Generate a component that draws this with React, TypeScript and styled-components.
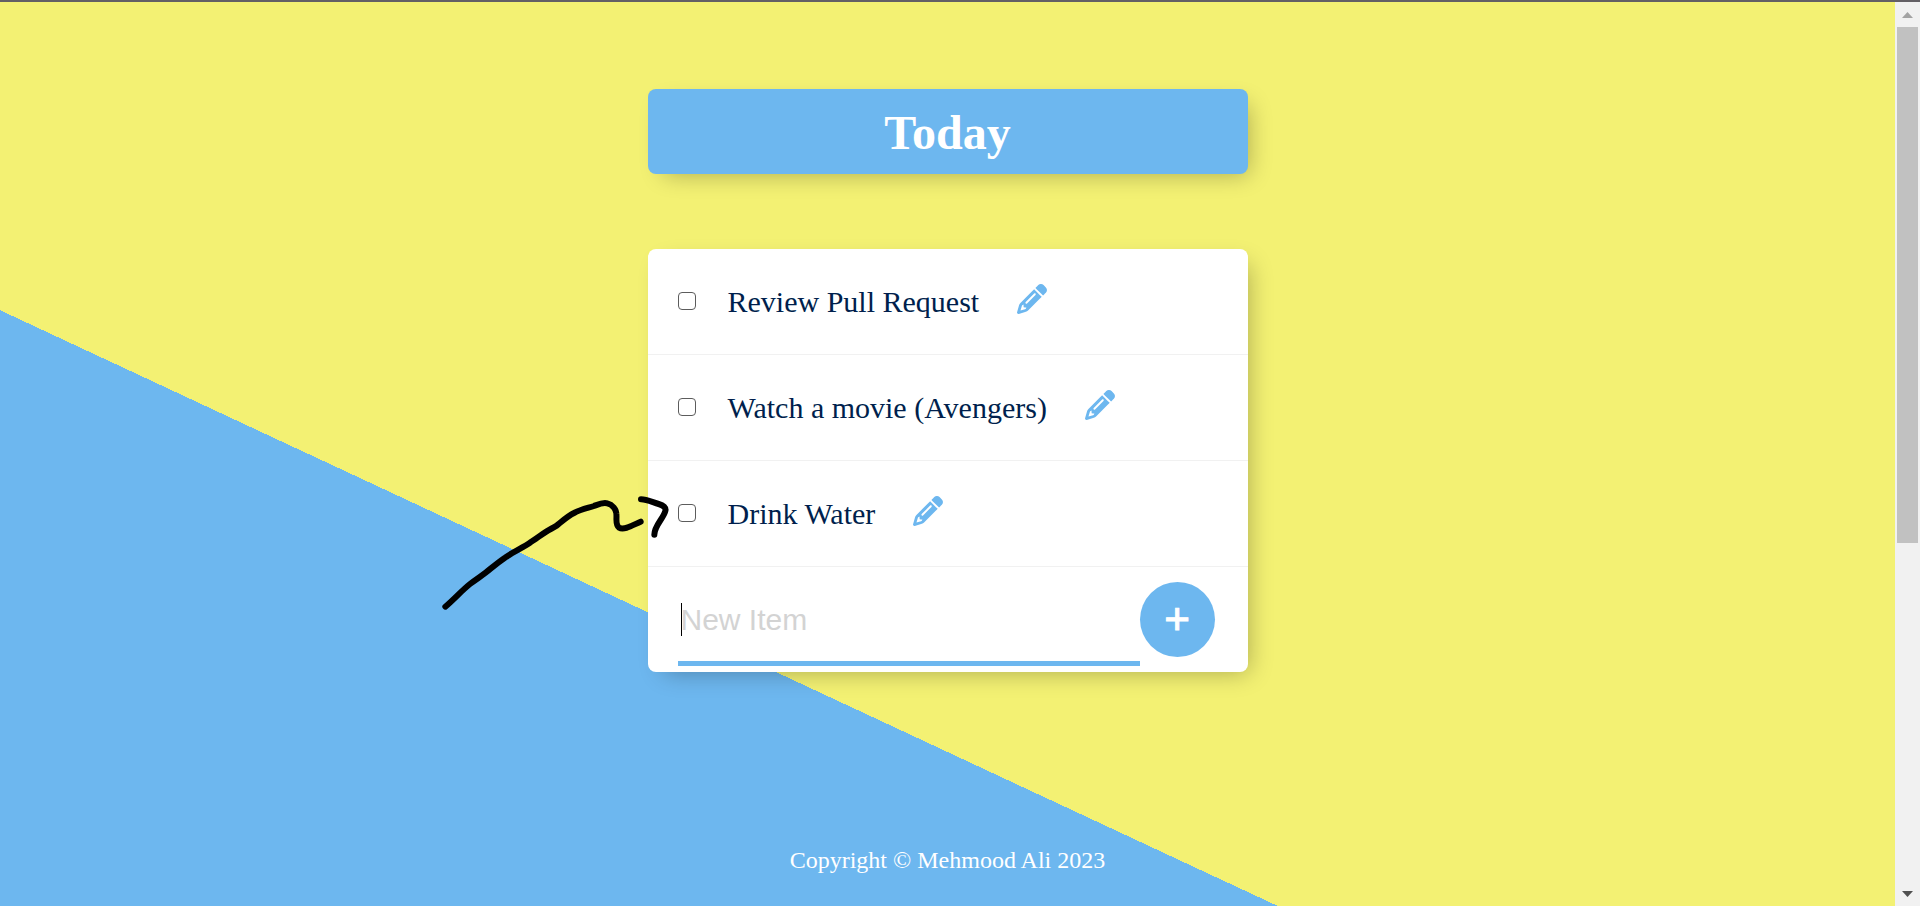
import React, { useState } from "react";
import styled, { createGlobalStyle } from "styled-components";
import { FaPencil } from "react-icons/fa6";

const blue = "#6db7ef";
const yellow = "#f3f173";

const GlobalStyle = createGlobalStyle`
  * { box-sizing: border-box; }
  body { margin: 0; }
`;

const Window = styled.div`
  display: flex;
  height: 100vh;
  border-top: 2px solid #636065;
  overflow: hidden;
`;

const Page = styled.main`
  flex: 1;
  min-width: 0;
  overflow: hidden;
  padding-top: 87px;
  background: ${yellow} linear-gradient(25deg, ${blue} 50%, ${yellow} 50%) no-repeat;
  background-size: 100% 1500px;
  font-family: "Liberation Serif", "Times New Roman", serif;
`;

const Box = styled.section<{ $tinted?: boolean }>`
  position: relative;
  max-width: 600px;
  margin: 0 auto 75px;
  border-radius: 8px;
  box-shadow: 8px 8px 23px -8px rgba(0, 0, 0, 0.3);
  background: ${(p) => (p.$tinted ? blue : "#fff")};
`;

const Title = styled.h1`
  margin: 0;
  padding: 16px 15px 14px;
  font-size: 48px;
  line-height: 55px;
  text-align: center;
  color: #fff;
`;

const Item = styled.div`
  display: flex;
  align-items: center;
  height: 106px;
  padding: 0 30px;
  border-bottom: 1px solid #f1f1f1;
`;

const Check = styled.input`
  appearance: none;
  width: 18px;
  height: 18px;
  margin: 0 32px 2px 0;
  border: 1px solid #5c5c5c;
  border-radius: 4px;
  background: #fff;
  &:checked { background: ${blue}; }
`;

const Label = styled.label`
  font-size: 30px;
  line-height: 36px;
  color: #001f4d;
`;

const EditButton = styled.button`
  display: flex;
  margin-left: 38px;
  padding: 0 0 6px;
  border: 0;
  background: none;
  color: ${blue};
  font-size: 30px;
`;

const NewItem = styled.form`
  display: flex;
  align-items: center;
  height: 105px;
  padding: 0 33px 0 30px;
`;

const Field = styled.div`
  position: relative;
  flex: 1;
  align-self: flex-end;
  margin-bottom: 6px;
`;

const TextInput = styled.input`
  display: block;
  width: 100%;
  height: 90px;
  padding: 2px 3px 0;
  border: 0;
  border-bottom: 5px solid ${blue};
  border-radius: 0;
  outline: 0;
  background: transparent;
  font: 30px "Liberation Sans", Arial, sans-serif;
  caret-color: transparent;
  &::placeholder { color: #d3d3d3; opacity: 1; }
`;

const Caret = styled.span`
  position: absolute;
  left: 3px;
  top: 27px;
  width: 1px;
  height: 33px;
  background: #000;
`;

const AddButton = styled.button`
  display: flex;
  align-items: center;
  justify-content: center;
  width: 75px;
  height: 75px;
  padding: 0 0 1px;
  border: 0;
  border-radius: 50%;
  background: ${blue};
  color: #fff;
  font: 44px "Liberation Sans", Arial, sans-serif;
  -webkit-text-stroke: 1px #fff;
`;

const Arrow = styled.svg`
  position: absolute;
  left: -218px;
  top: 231px;
  width: 260px;
  height: 140px;
  pointer-events: none;
`;

const Footer = styled.footer`
  padding-top: 99px;
  font-size: 24px;
  line-height: 28px;
  text-align: center;
  color: #fff;
`;

const Scrollbar = styled.div`
  display: flex;
  flex-direction: column;
  width: 25px;
  padding: 0 2px;
  background: #f1f1f1;
`;

const ScrollEnd = styled.svg`
  display: block;
  width: 21px;
  height: 25px;
`;

const Track = styled.div`
  flex: 1;
`;

const Thumb = styled.div`
  height: 60.4%;
  background: #c1c1c1;
`;

const items = ["Review Pull Request", "Watch a movie (Avengers)", "Drink Water"];

export default function App() {
  const [text, setText] = useState("");
  return (
    <Window>
      <GlobalStyle />
      <Page>
        <Box $tinted>
          <Title>Today</Title>
        </Box>
        <Box>
          {items.map((item, i) => (
            <Item key={item}>
              <Check type="checkbox" id={`item-${i}`} />
              <Label htmlFor={`item-${i}`}>{item}</Label>
              <EditButton type="button" aria-label={`Edit ${item}`}>
                <FaPencil />
              </EditButton>
            </Item>
          ))}
          <NewItem onSubmit={(e) => e.preventDefault()}>
            <Field>
              <TextInput
                aria-label="New Item"
                placeholder="New Item"
                autoComplete="off"
                value={text}
                onChange={(e) => setText(e.target.value)}
              />
              {text === "" && <Caret />}
            </Field>
            <AddButton type="submit" aria-label="Add item">+</AddButton>
          </NewItem>
          <Arrow viewBox="0 0 780 420" fill="none" stroke="#000" strokeWidth="18" strokeLinecap="round" strokeLinejoin="round" aria-hidden="true">
            <path d="M46 380C72 358 96 331 120 312C138 298 150 291 167 278C187 262 204 247 225 233C252 214 278 203 300 188C317 178 332 165 350 154C360 148 370 143 380 137C397 123 412 109 432 99C452 88 474 84 492 78C507 72 519 66 532 70C548 74 558 88 559 100C561 116 555 134 567 143C583 152 610 134 632 125" />
            <path d="M633 58C651 58 668 67 686 72C700 76 709 83 706 93C700 116 673 137 673 164" />
          </Arrow>
        </Box>
        <Footer>Copyright © Mehmood Ali 2023</Footer>
      </Page>
      <Scrollbar aria-hidden="true">
        <ScrollEnd viewBox="0 0 21 25">
          <path d="M5 16L10.500 10L16 16Z" fill="#a3a3a3" />
        </ScrollEnd>
        <Track>
          <Thumb />
        </Track>
        <ScrollEnd viewBox="0 0 21 25">
          <path d="M5 10L10.500 16L16 10Z" fill="#505050" />
        </ScrollEnd>
      </Scrollbar>
    </Window>
  );
}
